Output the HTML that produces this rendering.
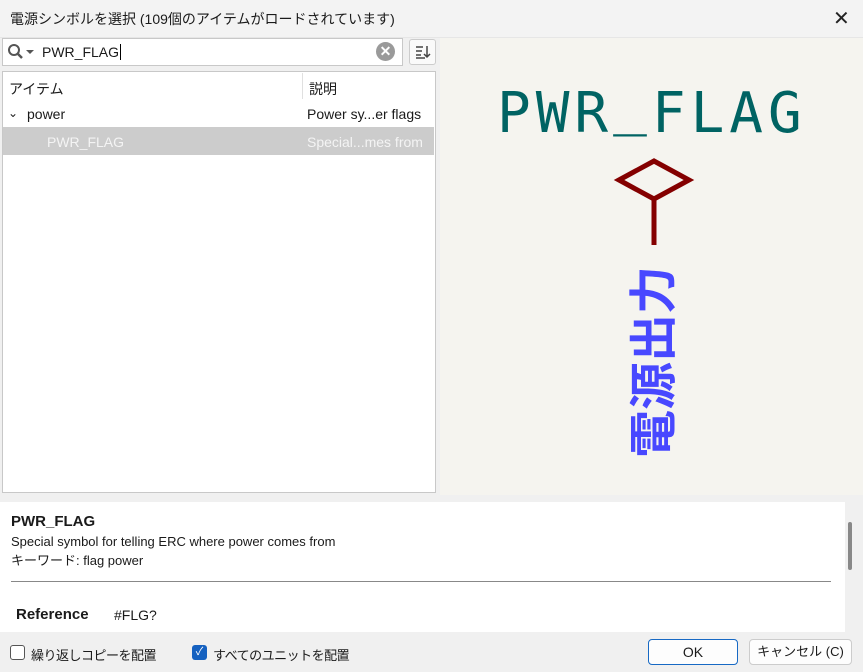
<!DOCTYPE html>
<html><head><meta charset="utf-8"><style>
*{box-sizing:border-box;margin:0;padding:0}
body{width:863px;height:672px;background:#f0f0f0;font-family:"Liberation Sans","Noto Sans CJK JP",sans-serif;font-size:14px;color:#1a1a1a;position:relative;overflow:hidden}
.abs{position:absolute}
</style></head><body>
<div class="abs" style="left:0;top:0;width:863px;height:38px;background:#f3f3f3;border-bottom:1px solid #e6e6e6"></div>
<div class="abs" style="left:10px;top:9px;font-size:14px">電源シンボルを選択 (109個のアイテムがロードされています)</div>
<div class="abs" style="left:833px;top:6px;font-size:20px;color:#222">✕</div>
<div class="abs" style="left:440px;top:38px;width:423px;height:457px;background:#f5f4ef"></div>
<!-- search -->
<div class="abs" style="left:2px;top:38px;width:401px;height:28px;background:#fff;border:1px solid #c8c8c8"></div>
<svg class="abs" style="left:6px;top:42px" width="32" height="20"><circle cx="8" cy="8" r="5" fill="none" stroke="#555" stroke-width="2"/><line x1="12" y1="12" x2="16" y2="16" stroke="#555" stroke-width="2.5"/><path d="M20 8h8l-4 4z" fill="#555"/></svg>
<div class="abs" style="left:42px;top:44px;font-size:14px">PWR_FLAG<span style="border-left:1px solid #000;margin-left:1px"></span></div>
<div class="abs" style="left:376px;top:42px;width:19px;height:19px;border-radius:50%;background:#9a9a9a;color:#fff;font-size:14px;line-height:19px;text-align:center;font-weight:bold">✕</div>
<div class="abs" style="left:409px;top:39px;width:27px;height:26px;background:#fafafa;border:1px solid #ccc;border-radius:3px"></div>
<svg class="abs" style="left:414px;top:44px" width="18" height="16"><path d="M2 3h7M2 7h6M2 11h5M2 14h9" stroke="#444" stroke-width="1.5"/><path d="M13 2v11M10 10l3 3 3-3" stroke="#444" stroke-width="1.5" fill="none"/></svg>
<!-- tree -->
<div class="abs" style="left:2px;top:71px;width:434px;height:422px;background:#fff;border:1px solid #c8c8c8"></div>
<div class="abs" style="left:302px;top:73px;width:1px;height:26px;background:#e0e0e0"></div>
<div class="abs" style="left:9px;top:79px">アイテム</div>
<div class="abs" style="left:309px;top:79px">説明</div>
<div class="abs" style="left:8px;top:106px;font-size:12px">⌄</div>
<div class="abs" style="left:27px;top:106px">power</div>
<div class="abs" style="left:307px;top:106px">Power sy...er flags</div>
<div class="abs" style="left:3px;top:127px;width:431px;height:28px;background:#cccccc"></div>
<div class="abs" style="left:47px;top:134px;color:#f4f4f4">PWR_FLAG</div>
<div class="abs" style="left:307px;top:134px;color:#f4f4f4">Special...mes from</div>
<!-- preview -->
<div class="abs" style="left:497px;top:81px;font-family:'DejaVu Sans Mono','Liberation Mono',monospace;font-size:56px;color:#006363;letter-spacing:5px;white-space:nowrap">PWR<span style="position:relative;top:-9px">_</span>FLAG</div>
<svg class="abs" style="left:600px;top:150px" width="110" height="100"><path d="M19 30L54 11L89 30L54 49Z M54 49V95" fill="none" stroke="#840000" stroke-width="5" stroke-linejoin="miter"/></svg>
<div class="abs" style="left:549px;top:336px;width:200px;height:52px;transform:rotate(-90deg);font-size:48px;line-height:52px;color:#4848ff;text-align:center;font-weight:bold;font-family:'Noto Sans CJK JP',sans-serif">電源出力</div>
<!-- info -->
<div class="abs" style="left:0;top:502px;width:845px;height:130px;background:#fff"></div>
<div class="abs" style="left:848px;top:522px;width:4px;height:48px;background:#888;border-radius:2px"></div>
<div class="abs" style="left:11px;top:513px;font-weight:bold;font-size:15px">PWR_FLAG</div>
<div class="abs" style="left:11px;top:534px;font-size:13px">Special symbol for telling ERC where power comes from</div>
<div class="abs" style="left:11px;top:550px;font-size:13px">キーワード: flag power</div>
<div class="abs" style="left:11px;top:581px;width:820px;height:1px;background:#888"></div>
<div class="abs" style="left:16px;top:606px;font-weight:bold;font-size:15px">Reference</div>
<div class="abs" style="left:114px;top:607px;font-size:14px">#FLG?</div>
<!-- bottom -->
<div class="abs" style="left:10px;top:645px;width:15px;height:15px;border:1px solid #555;border-radius:3px;background:#fff"></div>
<div class="abs" style="left:31px;top:645px;font-size:13px;letter-spacing:-0.5px">繰り返しコピーを配置</div>
<div class="abs" style="left:192px;top:645px;width:15px;height:15px;border-radius:3px;background:#1561c0;color:#fff;font-size:11px;line-height:15px;text-align:center">✓</div>
<div class="abs" style="left:213px;top:645px;font-size:13px;letter-spacing:-0.5px">すべてのユニットを配置</div>
<div class="abs" style="left:648px;top:639px;width:90px;height:26px;background:#fdfdfd;border:1px solid #1769c4;border-radius:4px;text-align:center;line-height:24px">OK</div>
<div class="abs" style="left:749px;top:639px;width:103px;height:26px;background:#fdfdfd;border:1px solid #ccc;border-radius:4px;text-align:center;line-height:24px;font-size:13px">キャンセル (C)</div>
</body></html>
